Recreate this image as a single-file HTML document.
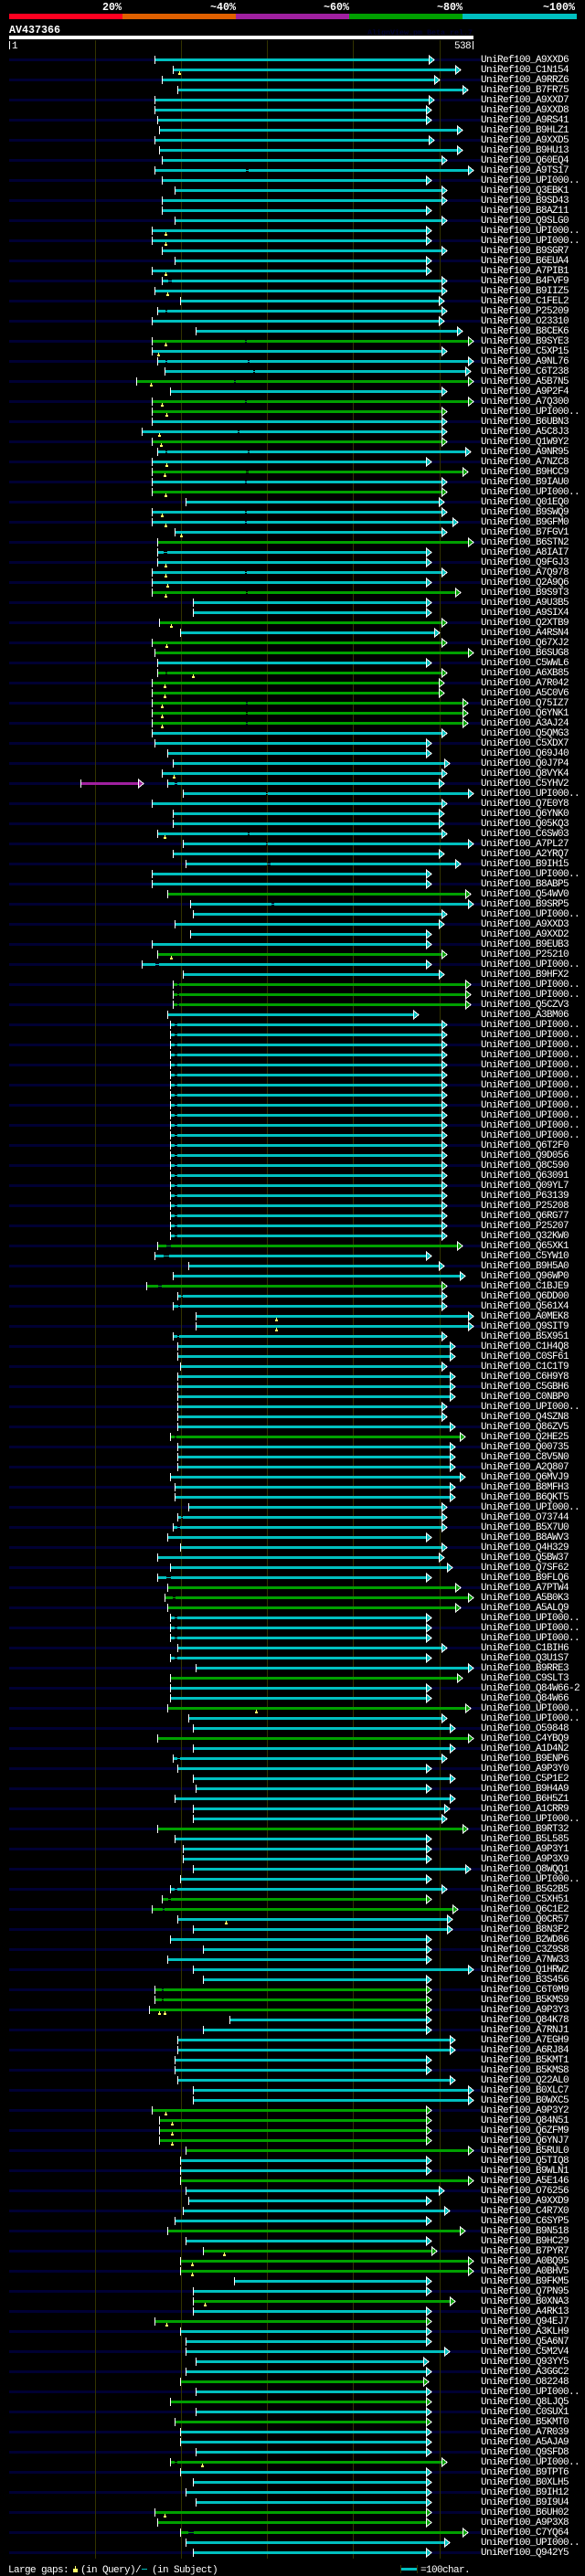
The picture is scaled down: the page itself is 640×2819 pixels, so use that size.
<!DOCTYPE html>
<html lang="en"><head><meta charset="utf-8"><title>AV437366</title>
<style>
html,body{margin:0;padding:0;background:#000}
svg{display:block}
text{font-family:"Liberation Mono",monospace;font-size:11px;letter-spacing:-.6px;fill:#fff}
.b{font-weight:bold;font-size:11.67px;letter-spacing:0}
.t,.g,.p{fill:none;stroke-width:3}
.u,.v{fill:none;stroke-width:1}
.t,.u{stroke:#00c0c0}
.g,.v{stroke:#00a000}
.p{stroke:#a020a0}
</style></head><body>
<svg xmlns="http://www.w3.org/2000/svg" width="640" height="2819" viewBox="0 0 640 2819">
<defs>
<rect id="s" y="-4" width="1" height="9" fill="#fff"/>
<path id="a" d="M.5 -4L6 .5L.5 5Z" fill="#00c0c0" stroke="#fff" stroke-width="1" shape-rendering="crispEdges"/>
<path id="b" d="M.5 -4L6 .5L.5 5Z" fill="#00a000" stroke="#fff" stroke-width="1" shape-rendering="crispEdges"/>
<path id="c" d="M.5 -4L6 .5L.5 5Z" fill="#a020a0" stroke="#fff" stroke-width="1" shape-rendering="crispEdges"/>
<path id="y" d="M0 2h1v2h1v2h-3v-2h1z" fill="#ffff66"/>
</defs>
<rect width="640" height="2819" fill="#000"/>
<rect x="10" y="15" width="124" height="6" fill="#ff0020"/>
<rect x="134" y="15" width="124" height="6" fill="#e06000"/>
<rect x="258" y="15" width="124" height="6" fill="#a020a0"/>
<rect x="382" y="15" width="124" height="6" fill="#00a000"/>
<rect x="506" y="15" width="125" height="6" fill="#00c0c0"/>
<text class="b" x="112" y="11">20%</text>
<text class="b" x="230" y="11">~40%</text>
<text class="b" x="354" y="11">~60%</text>
<text class="b" x="478" y="11">~80%</text>
<text class="b" x="594" y="11">~100%</text>
<text class="b" x="10" y="36">AV437366</text>
<text x="402" y="38" style="font-size:8.33px;letter-spacing:0;font-weight:bold;fill:#000033">AlignView.pm Beta rel.7</text>
<rect x="10" y="39" width="508" height="4" fill="#fff"/>
<rect x="10" y="45" width="1" height="9" fill="#fff"/>
<text x="13" y="53">1</text>
<text x="497" y="53">538</text>
<rect x="517" y="45" width="1" height="9" fill="#fff"/>
<path d="M268 64V2796" stroke="#000033" stroke-width="516" stroke-dasharray="3 19" fill="none"/>
<path d="M104.5 44V2800M198.5 44V2800M292.5 44V2800M386.5 44V2800M481.5 44V2800" stroke="#333300" fill="none"/>
<g transform="translate(0 65)"><path class="t" d="M169 .5H469"/><use href="#s" x="169"/><use href="#a" x="469"/><text x="526" y="3">UniRef100_A9XXD6</text></g>
<g transform="translate(0 76)"><path class="t" d="M189 .5H498"/><use href="#s" x="189"/><use href="#a" x="498"/><use href="#y" x="196"/><text x="526" y="3">UniRef100_C1N154</text></g>
<g transform="translate(0 87)"><path class="t" d="M177 .5H475"/><use href="#s" x="177"/><use href="#a" x="475"/><text x="526" y="3">UniRef100_A9RRZ6</text></g>
<g transform="translate(0 98)"><path class="t" d="M194 .5H506"/><use href="#s" x="194"/><use href="#a" x="506"/><text x="526" y="3">UniRef100_B7FR75</text></g>
<g transform="translate(0 109)"><path class="t" d="M169 .5H469"/><use href="#s" x="169"/><use href="#a" x="469"/><text x="526" y="3">UniRef100_A9XXD7</text></g>
<g transform="translate(0 120)"><path class="t" d="M169 .5H466"/><use href="#s" x="169"/><use href="#a" x="466"/><text x="526" y="3">UniRef100_A9XXD8</text></g>
<g transform="translate(0 131)"><path class="t" d="M172 .5H466"/><use href="#s" x="172"/><use href="#a" x="466"/><text x="526" y="3">UniRef100_A9RS41</text></g>
<g transform="translate(0 142)"><path class="t" d="M174 .5H500"/><use href="#s" x="174"/><use href="#a" x="500"/><text x="526" y="3">UniRef100_B9HLZ1</text></g>
<g transform="translate(0 153)"><path class="t" d="M169 .5H469"/><use href="#s" x="169"/><use href="#a" x="469"/><text x="526" y="3">UniRef100_A9XXD5</text></g>
<g transform="translate(0 164)"><path class="t" d="M174 .5H500"/><use href="#s" x="174"/><use href="#a" x="500"/><text x="526" y="3">UniRef100_B9HU13</text></g>
<g transform="translate(0 175)"><path class="t" d="M177 .5H483"/><use href="#s" x="177"/><use href="#a" x="483"/><text x="526" y="3">UniRef100_Q60EQ4</text></g>
<g transform="translate(0 186)"><path class="t" d="M169 .5H269M272 .5H512"/><path class="u" d="M269 .5H272"/><use href="#s" x="169"/><use href="#a" x="512"/><text x="526" y="3">UniRef100_A9TS17</text></g>
<g transform="translate(0 197)"><path class="t" d="M177 .5H466"/><use href="#s" x="177"/><use href="#a" x="466"/><text x="526" y="3">UniRef100_UPI000..</text></g>
<g transform="translate(0 208)"><path class="t" d="M191 .5H483"/><use href="#s" x="191"/><use href="#a" x="483"/><text x="526" y="3">UniRef100_Q3EBK1</text></g>
<g transform="translate(0 219)"><path class="t" d="M177 .5H483"/><use href="#s" x="177"/><use href="#a" x="483"/><text x="526" y="3">UniRef100_B9SD43</text></g>
<g transform="translate(0 230)"><path class="t" d="M177 .5H466"/><use href="#s" x="177"/><use href="#a" x="466"/><text x="526" y="3">UniRef100_B8AZ11</text></g>
<g transform="translate(0 241)"><path class="t" d="M191 .5H483"/><use href="#s" x="191"/><use href="#a" x="483"/><text x="526" y="3">UniRef100_Q9SLG0</text></g>
<g transform="translate(0 252)"><path class="t" d="M166 .5H466"/><use href="#s" x="166"/><use href="#a" x="466"/><use href="#y" x="181"/><text x="526" y="3">UniRef100_UPI000..</text></g>
<g transform="translate(0 263)"><path class="t" d="M166 .5H466"/><use href="#s" x="166"/><use href="#a" x="466"/><use href="#y" x="181"/><text x="526" y="3">UniRef100_UPI000..</text></g>
<g transform="translate(0 274)"><path class="t" d="M177 .5H483"/><use href="#s" x="177"/><use href="#a" x="483"/><text x="526" y="3">UniRef100_B9SGR7</text></g>
<g transform="translate(0 285)"><path class="t" d="M191 .5H466"/><use href="#s" x="191"/><use href="#a" x="466"/><text x="526" y="3">UniRef100_B6EUA4</text></g>
<g transform="translate(0 296)"><path class="t" d="M166 .5H466"/><use href="#s" x="166"/><use href="#a" x="466"/><use href="#y" x="181"/><text x="526" y="3">UniRef100_A7PIB1</text></g>
<g transform="translate(0 307)"><path class="t" d="M177 .5H184M188 .5H483"/><path class="u" d="M184 .5H188"/><use href="#s" x="177"/><use href="#a" x="483"/><text x="526" y="3">UniRef100_B4FVF9</text></g>
<g transform="translate(0 318)"><path class="t" d="M169 .5H483"/><use href="#s" x="169"/><use href="#a" x="483"/><use href="#y" x="183"/><text x="526" y="3">UniRef100_B9IIZ5</text></g>
<g transform="translate(0 329)"><path class="t" d="M197 .5H480"/><use href="#s" x="197"/><use href="#a" x="480"/><text x="526" y="3">UniRef100_C1FEL2</text></g>
<g transform="translate(0 340)"><path class="t" d="M172 .5H181M183 .5H483"/><path class="u" d="M181 .5H183"/><use href="#s" x="172"/><use href="#a" x="483"/><text x="526" y="3">UniRef100_P25209</text></g>
<g transform="translate(0 351)"><path class="t" d="M166 .5H480"/><use href="#s" x="166"/><use href="#a" x="480"/><text x="526" y="3">UniRef100_O23310</text></g>
<g transform="translate(0 362)"><path class="t" d="M214 .5H500"/><use href="#s" x="214"/><use href="#a" x="500"/><text x="526" y="3">UniRef100_B8CEK6</text></g>
<g transform="translate(0 373)"><path class="g" d="M166 .5H268M270 .5H512"/><path class="v" d="M268 .5H270"/><use href="#s" x="166"/><use href="#b" x="512"/><use href="#y" x="181"/><text x="526" y="3">UniRef100_B9SYE3</text></g>
<g transform="translate(0 384)"><path class="t" d="M166 .5H483"/><use href="#s" x="166"/><use href="#a" x="483"/><use href="#y" x="173"/><text x="526" y="3">UniRef100_C5XP15</text></g>
<g transform="translate(0 395)"><path class="t" d="M172 .5H181M183 .5H271M273 .5H512"/><path class="u" d="M181 .5H183M271 .5H273"/><use href="#s" x="172"/><use href="#a" x="512"/><text x="526" y="3">UniRef100_A9NL76</text></g>
<g transform="translate(0 406)"><path class="t" d="M180 .5H277M279 .5H509"/><path class="u" d="M277 .5H279"/><use href="#s" x="180"/><use href="#a" x="509"/><text x="526" y="3">UniRef100_C6T238</text></g>
<g transform="translate(0 417)"><path class="g" d="M149 .5H256M258 .5H512"/><path class="v" d="M256 .5H258"/><use href="#s" x="149"/><use href="#b" x="512"/><use href="#y" x="165"/><text x="526" y="3">UniRef100_A5B7N5</text></g>
<g transform="translate(0 428)"><path class="t" d="M186 .5H483"/><use href="#s" x="186"/><use href="#a" x="483"/><text x="526" y="3">UniRef100_A9P2F4</text></g>
<g transform="translate(0 439)"><path class="g" d="M166 .5H268M270 .5H512"/><path class="v" d="M268 .5H270"/><use href="#s" x="166"/><use href="#b" x="512"/><use href="#y" x="177"/><text x="526" y="3">UniRef100_A7Q300</text></g>
<g transform="translate(0 450)"><path class="g" d="M166 .5H483"/><use href="#s" x="166"/><use href="#b" x="483"/><use href="#y" x="182"/><text x="526" y="3">UniRef100_UPI000..</text></g>
<g transform="translate(0 461)"><path class="t" d="M166 .5H483"/><use href="#s" x="166"/><use href="#a" x="483"/><text x="526" y="3">UniRef100_B6UBN3</text></g>
<g transform="translate(0 472)"><path class="t" d="M155 .5H260M262 .5H483"/><path class="u" d="M260 .5H262"/><use href="#s" x="155"/><use href="#a" x="483"/><use href="#y" x="174"/><text x="526" y="3">UniRef100_A5C8J3</text></g>
<g transform="translate(0 483)"><path class="g" d="M166 .5H483"/><use href="#s" x="166"/><use href="#b" x="483"/><use href="#y" x="176"/><text x="526" y="3">UniRef100_Q1W9Y2</text></g>
<g transform="translate(0 494)"><path class="t" d="M172 .5H181M183 .5H271M273 .5H509"/><path class="u" d="M181 .5H183M271 .5H273"/><use href="#s" x="172"/><use href="#a" x="509"/><text x="526" y="3">UniRef100_A9NR95</text></g>
<g transform="translate(0 505)"><path class="t" d="M166 .5H466"/><use href="#s" x="166"/><use href="#a" x="466"/><use href="#y" x="182"/><text x="526" y="3">UniRef100_A7NZC8</text></g>
<g transform="translate(0 516)"><path class="g" d="M166 .5H269M272 .5H506"/><path class="v" d="M269 .5H272"/><use href="#s" x="166"/><use href="#b" x="506"/><use href="#y" x="180"/><text x="526" y="3">UniRef100_B9HCC9</text></g>
<g transform="translate(0 527)"><path class="t" d="M166 .5H268M270 .5H483"/><path class="u" d="M268 .5H270"/><use href="#s" x="166"/><use href="#a" x="483"/><text x="526" y="3">UniRef100_B9IAU0</text></g>
<g transform="translate(0 538)"><path class="g" d="M166 .5H483"/><use href="#s" x="166"/><use href="#b" x="483"/><use href="#y" x="181"/><text x="526" y="3">UniRef100_UPI000..</text></g>
<g transform="translate(0 549)"><path class="t" d="M203 .5H480"/><use href="#s" x="203"/><use href="#a" x="480"/><text x="526" y="3">UniRef100_Q01EQ0</text></g>
<g transform="translate(0 560)"><path class="t" d="M166 .5H268M270 .5H483"/><path class="u" d="M268 .5H270"/><use href="#s" x="166"/><use href="#a" x="483"/><use href="#y" x="177"/><text x="526" y="3">UniRef100_B9SWQ9</text></g>
<g transform="translate(0 571)"><path class="t" d="M166 .5H268M270 .5H495"/><path class="u" d="M268 .5H270"/><use href="#s" x="166"/><use href="#a" x="495"/><use href="#y" x="181"/><text x="526" y="3">UniRef100_B9GFM0</text></g>
<g transform="translate(0 582)"><path class="t" d="M191 .5H483"/><use href="#s" x="191"/><use href="#a" x="483"/><use href="#y" x="198"/><text x="526" y="3">UniRef100_B7FGV1</text></g>
<g transform="translate(0 593)"><path class="g" d="M172 .5H512"/><use href="#s" x="172"/><use href="#b" x="512"/><text x="526" y="3">UniRef100_B6STN2</text></g>
<g transform="translate(0 604)"><path class="t" d="M172 .5H179M183 .5H466"/><path class="u" d="M179 .5H183"/><use href="#s" x="172"/><use href="#a" x="466"/><text x="526" y="3">UniRef100_A8IAI7</text></g>
<g transform="translate(0 615)"><path class="t" d="M172 .5H466"/><use href="#s" x="172"/><use href="#a" x="466"/><use href="#y" x="181"/><text x="526" y="3">UniRef100_Q9FGJ3</text></g>
<g transform="translate(0 626)"><path class="t" d="M166 .5H268M270 .5H483"/><path class="u" d="M268 .5H270"/><use href="#s" x="166"/><use href="#a" x="483"/><use href="#y" x="181"/><text x="526" y="3">UniRef100_A7Q978</text></g>
<g transform="translate(0 637)"><path class="t" d="M166 .5H466"/><use href="#s" x="166"/><use href="#a" x="466"/><use href="#y" x="183"/><text x="526" y="3">UniRef100_Q2A9Q6</text></g>
<g transform="translate(0 648)"><path class="g" d="M166 .5H269M271 .5H498"/><path class="v" d="M269 .5H271"/><use href="#s" x="166"/><use href="#b" x="498"/><use href="#y" x="181"/><text x="526" y="3">UniRef100_B9S9T3</text></g>
<g transform="translate(0 659)"><path class="t" d="M211 .5H466"/><use href="#s" x="211"/><use href="#a" x="466"/><text x="526" y="3">UniRef100_A9U3B5</text></g>
<g transform="translate(0 670)"><path class="t" d="M211 .5H466"/><use href="#s" x="211"/><use href="#a" x="466"/><text x="526" y="3">UniRef100_A9SIX4</text></g>
<g transform="translate(0 681)"><path class="g" d="M174 .5H483"/><use href="#s" x="174"/><use href="#b" x="483"/><use href="#y" x="187"/><text x="526" y="3">UniRef100_Q2XTB9</text></g>
<g transform="translate(0 692)"><path class="t" d="M197 .5H475"/><use href="#s" x="197"/><use href="#a" x="475"/><text x="526" y="3">UniRef100_A4RSN4</text></g>
<g transform="translate(0 703)"><path class="g" d="M166 .5H483"/><use href="#s" x="166"/><use href="#b" x="483"/><use href="#y" x="182"/><text x="526" y="3">UniRef100_Q67XJ2</text></g>
<g transform="translate(0 714)"><path class="g" d="M169 .5H512"/><use href="#s" x="169"/><use href="#b" x="512"/><text x="526" y="3">UniRef100_B6SUG8</text></g>
<g transform="translate(0 725)"><path class="t" d="M172 .5H466"/><use href="#s" x="172"/><use href="#a" x="466"/><text x="526" y="3">UniRef100_C5WWL6</text></g>
<g transform="translate(0 736)"><path class="g" d="M172 .5H181M183 .5H483"/><path class="v" d="M181 .5H183"/><use href="#s" x="172"/><use href="#b" x="483"/><use href="#y" x="211"/><text x="526" y="3">UniRef100_A6XB85</text></g>
<g transform="translate(0 747)"><path class="g" d="M166 .5H480"/><use href="#s" x="166"/><use href="#b" x="480"/><use href="#y" x="180"/><text x="526" y="3">UniRef100_A7R042</text></g>
<g transform="translate(0 758)"><path class="g" d="M166 .5H480"/><use href="#s" x="166"/><use href="#b" x="480"/><use href="#y" x="180"/><text x="526" y="3">UniRef100_A5C0V6</text></g>
<g transform="translate(0 769)"><path class="g" d="M166 .5H269M271 .5H506"/><path class="v" d="M269 .5H271"/><use href="#s" x="166"/><use href="#b" x="506"/><use href="#y" x="177"/><text x="526" y="3">UniRef100_Q75IZ7</text></g>
<g transform="translate(0 780)"><path class="g" d="M166 .5H269M271 .5H506"/><path class="v" d="M269 .5H271"/><use href="#s" x="166"/><use href="#b" x="506"/><use href="#y" x="177"/><text x="526" y="3">UniRef100_Q6YNK1</text></g>
<g transform="translate(0 791)"><path class="g" d="M166 .5H269M271 .5H506"/><path class="v" d="M269 .5H271"/><use href="#s" x="166"/><use href="#b" x="506"/><use href="#y" x="177"/><text x="526" y="3">UniRef100_A3AJ24</text></g>
<g transform="translate(0 802)"><path class="t" d="M166 .5H483"/><use href="#s" x="166"/><use href="#a" x="483"/><text x="526" y="3">UniRef100_Q5QMG3</text></g>
<g transform="translate(0 813)"><path class="t" d="M169 .5H466"/><use href="#s" x="169"/><use href="#a" x="466"/><text x="526" y="3">UniRef100_C5XDX7</text></g>
<g transform="translate(0 824)"><path class="t" d="M183 .5H466"/><use href="#s" x="183"/><use href="#a" x="466"/><text x="526" y="3">UniRef100_Q69J40</text></g>
<g transform="translate(0 835)"><path class="t" d="M189 .5H486"/><use href="#s" x="189"/><use href="#a" x="486"/><text x="526" y="3">UniRef100_Q0J7P4</text></g>
<g transform="translate(0 846)"><path class="t" d="M177 .5H483"/><use href="#s" x="177"/><use href="#a" x="483"/><use href="#y" x="190"/><text x="526" y="3">UniRef100_Q8VYK4</text></g>
<g transform="translate(0 857)"><path class="p" d="M88 .5H151"/><use href="#s" x="88"/><use href="#c" x="151"/><path class="t" d="M183 .5H191M194 .5H480"/><path class="u" d="M191 .5H194"/><use href="#s" x="183"/><use href="#a" x="480"/><text x="526" y="3">UniRef100_C5YHV2</text></g>
<g transform="translate(0 868)"><path class="t" d="M200 .5H291M293 .5H512"/><path class="u" d="M291 .5H293"/><use href="#s" x="200"/><use href="#a" x="512"/><text x="526" y="3">UniRef100_UPI000..</text></g>
<g transform="translate(0 879)"><path class="t" d="M166 .5H483"/><use href="#s" x="166"/><use href="#a" x="483"/><text x="526" y="3">UniRef100_Q7E0Y8</text></g>
<g transform="translate(0 890)"><path class="t" d="M189 .5H480"/><use href="#s" x="189"/><use href="#a" x="480"/><text x="526" y="3">UniRef100_Q6YNK0</text></g>
<g transform="translate(0 901)"><path class="t" d="M189 .5H480"/><use href="#s" x="189"/><use href="#a" x="480"/><text x="526" y="3">UniRef100_Q05KQ3</text></g>
<g transform="translate(0 912)"><path class="t" d="M172 .5H271M273 .5H483"/><path class="u" d="M271 .5H273"/><use href="#s" x="172"/><use href="#a" x="483"/><use href="#y" x="180"/><text x="526" y="3">UniRef100_C6SW03</text></g>
<g transform="translate(0 923)"><path class="t" d="M200 .5H291M293 .5H512"/><path class="u" d="M291 .5H293"/><use href="#s" x="200"/><use href="#a" x="512"/><text x="526" y="3">UniRef100_A7PL27</text></g>
<g transform="translate(0 934)"><path class="t" d="M189 .5H480"/><use href="#s" x="189"/><use href="#a" x="480"/><text x="526" y="3">UniRef100_A2YRQ7</text></g>
<g transform="translate(0 945)"><path class="t" d="M203 .5H292M296 .5H498"/><path class="u" d="M292 .5H296"/><use href="#s" x="203"/><use href="#a" x="498"/><text x="526" y="3">UniRef100_B9IH15</text></g>
<g transform="translate(0 956)"><path class="t" d="M166 .5H466"/><use href="#s" x="166"/><use href="#a" x="466"/><text x="526" y="3">UniRef100_UPI000..</text></g>
<g transform="translate(0 967)"><path class="t" d="M166 .5H466"/><use href="#s" x="166"/><use href="#a" x="466"/><text x="526" y="3">UniRef100_B8ABP5</text></g>
<g transform="translate(0 978)"><path class="g" d="M183 .5H509"/><use href="#s" x="183"/><use href="#b" x="509"/><text x="526" y="3">UniRef100_Q54WV0</text></g>
<g transform="translate(0 989)"><path class="t" d="M208 .5H297M300 .5H512"/><path class="u" d="M297 .5H300"/><use href="#s" x="208"/><use href="#a" x="512"/><text x="526" y="3">UniRef100_B9SRP5</text></g>
<g transform="translate(0 1000)"><path class="t" d="M211 .5H483"/><use href="#s" x="211"/><use href="#a" x="483"/><text x="526" y="3">UniRef100_UPI000..</text></g>
<g transform="translate(0 1011)"><path class="t" d="M191 .5H480"/><use href="#s" x="191"/><use href="#a" x="480"/><text x="526" y="3">UniRef100_A9XXD3</text></g>
<g transform="translate(0 1022)"><path class="t" d="M208 .5H466"/><use href="#s" x="208"/><use href="#a" x="466"/><text x="526" y="3">UniRef100_A9XXD2</text></g>
<g transform="translate(0 1033)"><path class="t" d="M166 .5H466"/><use href="#s" x="166"/><use href="#a" x="466"/><text x="526" y="3">UniRef100_B9EUB3</text></g>
<g transform="translate(0 1044)"><path class="g" d="M172 .5H483"/><use href="#s" x="172"/><use href="#b" x="483"/><use href="#y" x="187"/><text x="526" y="3">UniRef100_P25210</text></g>
<g transform="translate(0 1055)"><path class="t" d="M155 .5H170M174 .5H466"/><path class="u" d="M170 .5H174"/><use href="#s" x="155"/><use href="#a" x="466"/><text x="526" y="3">UniRef100_UPI000..</text></g>
<g transform="translate(0 1066)"><path class="t" d="M200 .5H480"/><use href="#s" x="200"/><use href="#a" x="480"/><text x="526" y="3">UniRef100_B9HFX2</text></g>
<g transform="translate(0 1077)"><path class="g" d="M189 .5H194M196 .5H509"/><path class="v" d="M194 .5H196"/><use href="#s" x="189"/><use href="#b" x="509"/><text x="526" y="3">UniRef100_UPI000..</text></g>
<g transform="translate(0 1088)"><path class="g" d="M189 .5H194M196 .5H509"/><path class="v" d="M194 .5H196"/><use href="#s" x="189"/><use href="#b" x="509"/><text x="526" y="3">UniRef100_UPI000..</text></g>
<g transform="translate(0 1099)"><path class="g" d="M189 .5H194M196 .5H509"/><path class="v" d="M194 .5H196"/><use href="#s" x="189"/><use href="#b" x="509"/><text x="526" y="3">UniRef100_Q5CZV3</text></g>
<g transform="translate(0 1110)"><path class="t" d="M183 .5H452"/><use href="#s" x="183"/><use href="#a" x="452"/><text x="526" y="3">UniRef100_A3BM06</text></g>
<g transform="translate(0 1121)"><path class="t" d="M186 .5H191M194 .5H483"/><path class="u" d="M191 .5H194"/><use href="#s" x="186"/><use href="#a" x="483"/><text x="526" y="3">UniRef100_UPI000..</text></g>
<g transform="translate(0 1132)"><path class="t" d="M186 .5H191M194 .5H483"/><path class="u" d="M191 .5H194"/><use href="#s" x="186"/><use href="#a" x="483"/><text x="526" y="3">UniRef100_UPI000..</text></g>
<g transform="translate(0 1143)"><path class="t" d="M186 .5H191M194 .5H483"/><path class="u" d="M191 .5H194"/><use href="#s" x="186"/><use href="#a" x="483"/><text x="526" y="3">UniRef100_UPI000..</text></g>
<g transform="translate(0 1154)"><path class="t" d="M186 .5H191M194 .5H483"/><path class="u" d="M191 .5H194"/><use href="#s" x="186"/><use href="#a" x="483"/><text x="526" y="3">UniRef100_UPI000..</text></g>
<g transform="translate(0 1165)"><path class="t" d="M186 .5H191M194 .5H483"/><path class="u" d="M191 .5H194"/><use href="#s" x="186"/><use href="#a" x="483"/><text x="526" y="3">UniRef100_UPI000..</text></g>
<g transform="translate(0 1176)"><path class="t" d="M186 .5H191M194 .5H483"/><path class="u" d="M191 .5H194"/><use href="#s" x="186"/><use href="#a" x="483"/><text x="526" y="3">UniRef100_UPI000..</text></g>
<g transform="translate(0 1187)"><path class="t" d="M186 .5H191M194 .5H483"/><path class="u" d="M191 .5H194"/><use href="#s" x="186"/><use href="#a" x="483"/><text x="526" y="3">UniRef100_UPI000..</text></g>
<g transform="translate(0 1198)"><path class="t" d="M186 .5H191M194 .5H483"/><path class="u" d="M191 .5H194"/><use href="#s" x="186"/><use href="#a" x="483"/><text x="526" y="3">UniRef100_UPI000..</text></g>
<g transform="translate(0 1209)"><path class="t" d="M186 .5H191M194 .5H483"/><path class="u" d="M191 .5H194"/><use href="#s" x="186"/><use href="#a" x="483"/><text x="526" y="3">UniRef100_UPI000..</text></g>
<g transform="translate(0 1220)"><path class="t" d="M186 .5H191M194 .5H483"/><path class="u" d="M191 .5H194"/><use href="#s" x="186"/><use href="#a" x="483"/><text x="526" y="3">UniRef100_UPI000..</text></g>
<g transform="translate(0 1231)"><path class="t" d="M186 .5H191M194 .5H483"/><path class="u" d="M191 .5H194"/><use href="#s" x="186"/><use href="#a" x="483"/><text x="526" y="3">UniRef100_UPI000..</text></g>
<g transform="translate(0 1242)"><path class="t" d="M186 .5H191M194 .5H483"/><path class="u" d="M191 .5H194"/><use href="#s" x="186"/><use href="#a" x="483"/><text x="526" y="3">UniRef100_UPI000..</text></g>
<g transform="translate(0 1253)"><path class="t" d="M186 .5H191M194 .5H483"/><path class="u" d="M191 .5H194"/><use href="#s" x="186"/><use href="#a" x="483"/><text x="526" y="3">UniRef100_Q6T2F0</text></g>
<g transform="translate(0 1264)"><path class="t" d="M186 .5H191M194 .5H483"/><path class="u" d="M191 .5H194"/><use href="#s" x="186"/><use href="#a" x="483"/><text x="526" y="3">UniRef100_Q9D056</text></g>
<g transform="translate(0 1275)"><path class="t" d="M186 .5H191M194 .5H483"/><path class="u" d="M191 .5H194"/><use href="#s" x="186"/><use href="#a" x="483"/><text x="526" y="3">UniRef100_Q8C590</text></g>
<g transform="translate(0 1286)"><path class="t" d="M186 .5H191M194 .5H483"/><path class="u" d="M191 .5H194"/><use href="#s" x="186"/><use href="#a" x="483"/><text x="526" y="3">UniRef100_Q63091</text></g>
<g transform="translate(0 1297)"><path class="t" d="M186 .5H191M194 .5H483"/><path class="u" d="M191 .5H194"/><use href="#s" x="186"/><use href="#a" x="483"/><text x="526" y="3">UniRef100_Q09YL7</text></g>
<g transform="translate(0 1308)"><path class="t" d="M186 .5H191M194 .5H483"/><path class="u" d="M191 .5H194"/><use href="#s" x="186"/><use href="#a" x="483"/><text x="526" y="3">UniRef100_P63139</text></g>
<g transform="translate(0 1319)"><path class="t" d="M186 .5H191M194 .5H483"/><path class="u" d="M191 .5H194"/><use href="#s" x="186"/><use href="#a" x="483"/><text x="526" y="3">UniRef100_P25208</text></g>
<g transform="translate(0 1330)"><path class="t" d="M186 .5H191M194 .5H483"/><path class="u" d="M191 .5H194"/><use href="#s" x="186"/><use href="#a" x="483"/><text x="526" y="3">UniRef100_Q6RG77</text></g>
<g transform="translate(0 1341)"><path class="t" d="M186 .5H191M194 .5H483"/><path class="u" d="M191 .5H194"/><use href="#s" x="186"/><use href="#a" x="483"/><text x="526" y="3">UniRef100_P25207</text></g>
<g transform="translate(0 1352)"><path class="t" d="M186 .5H191M194 .5H483"/><path class="u" d="M191 .5H194"/><use href="#s" x="186"/><use href="#a" x="483"/><text x="526" y="3">UniRef100_Q32KW0</text></g>
<g transform="translate(0 1363)"><path class="g" d="M172 .5H182M187 .5H500"/><path class="v" d="M182 .5H187"/><use href="#s" x="172"/><use href="#b" x="500"/><text x="526" y="3">UniRef100_Q65XK1</text></g>
<g transform="translate(0 1374)"><path class="t" d="M169 .5H179M185 .5H466"/><path class="u" d="M179 .5H185"/><use href="#s" x="169"/><use href="#a" x="466"/><text x="526" y="3">UniRef100_C5YW10</text></g>
<g transform="translate(0 1385)"><path class="t" d="M206 .5H480"/><use href="#s" x="206"/><use href="#a" x="480"/><text x="526" y="3">UniRef100_B9H5A0</text></g>
<g transform="translate(0 1396)"><path class="t" d="M189 .5H503"/><use href="#s" x="189"/><use href="#a" x="503"/><text x="526" y="3">UniRef100_Q96WP0</text></g>
<g transform="translate(0 1407)"><path class="g" d="M160 .5H173M177 .5H483"/><path class="v" d="M173 .5H177"/><use href="#s" x="160"/><use href="#b" x="483"/><text x="526" y="3">UniRef100_C1BJE9</text></g>
<g transform="translate(0 1418)"><path class="t" d="M194 .5H198M200 .5H483"/><path class="u" d="M198 .5H200"/><use href="#s" x="194"/><use href="#a" x="483"/><text x="526" y="3">UniRef100_Q6DD00</text></g>
<g transform="translate(0 1429)"><path class="t" d="M189 .5H195M197 .5H483"/><path class="u" d="M195 .5H197"/><use href="#s" x="189"/><use href="#a" x="483"/><text x="526" y="3">UniRef100_Q561X4</text></g>
<g transform="translate(0 1440)"><path class="t" d="M214 .5H512"/><use href="#s" x="214"/><use href="#a" x="512"/><use href="#y" x="302"/><text x="526" y="3">UniRef100_A0MEK8</text></g>
<g transform="translate(0 1451)"><path class="t" d="M214 .5H512"/><use href="#s" x="214"/><use href="#a" x="512"/><use href="#y" x="302"/><text x="526" y="3">UniRef100_Q9SIT9</text></g>
<g transform="translate(0 1462)"><path class="t" d="M189 .5H194M196 .5H483"/><path class="u" d="M194 .5H196"/><use href="#s" x="189"/><use href="#a" x="483"/><text x="526" y="3">UniRef100_B5X951</text></g>
<g transform="translate(0 1473)"><path class="t" d="M194 .5H492"/><use href="#s" x="194"/><use href="#a" x="492"/><text x="526" y="3">UniRef100_C1H4Q8</text></g>
<g transform="translate(0 1484)"><path class="t" d="M194 .5H492"/><use href="#s" x="194"/><use href="#a" x="492"/><text x="526" y="3">UniRef100_C0SF61</text></g>
<g transform="translate(0 1495)"><path class="t" d="M197 .5H483"/><use href="#s" x="197"/><use href="#a" x="483"/><text x="526" y="3">UniRef100_C1C1T9</text></g>
<g transform="translate(0 1506)"><path class="t" d="M194 .5H492"/><use href="#s" x="194"/><use href="#a" x="492"/><text x="526" y="3">UniRef100_C6H9Y8</text></g>
<g transform="translate(0 1517)"><path class="t" d="M194 .5H492"/><use href="#s" x="194"/><use href="#a" x="492"/><text x="526" y="3">UniRef100_C5GBH6</text></g>
<g transform="translate(0 1528)"><path class="t" d="M194 .5H492"/><use href="#s" x="194"/><use href="#a" x="492"/><text x="526" y="3">UniRef100_C0NBP0</text></g>
<g transform="translate(0 1539)"><path class="t" d="M194 .5H483"/><use href="#s" x="194"/><use href="#a" x="483"/><text x="526" y="3">UniRef100_UPI000..</text></g>
<g transform="translate(0 1550)"><path class="t" d="M194 .5H483"/><use href="#s" x="194"/><use href="#a" x="483"/><text x="526" y="3">UniRef100_Q4SZN8</text></g>
<g transform="translate(0 1561)"><path class="t" d="M194 .5H492"/><use href="#s" x="194"/><use href="#a" x="492"/><text x="526" y="3">UniRef100_Q86ZV5</text></g>
<g transform="translate(0 1572)"><path class="g" d="M186 .5H191M193 .5H503"/><path class="v" d="M191 .5H193"/><use href="#s" x="186"/><use href="#b" x="503"/><text x="526" y="3">UniRef100_Q2HE25</text></g>
<g transform="translate(0 1583)"><path class="t" d="M194 .5H492"/><use href="#s" x="194"/><use href="#a" x="492"/><text x="526" y="3">UniRef100_Q00735</text></g>
<g transform="translate(0 1594)"><path class="t" d="M194 .5H492"/><use href="#s" x="194"/><use href="#a" x="492"/><text x="526" y="3">UniRef100_C8V5N0</text></g>
<g transform="translate(0 1605)"><path class="t" d="M194 .5H492"/><use href="#s" x="194"/><use href="#a" x="492"/><text x="526" y="3">UniRef100_A2Q807</text></g>
<g transform="translate(0 1616)"><path class="t" d="M186 .5H503"/><use href="#s" x="186"/><use href="#a" x="503"/><text x="526" y="3">UniRef100_Q6MVJ9</text></g>
<g transform="translate(0 1627)"><path class="t" d="M191 .5H492"/><use href="#s" x="191"/><use href="#a" x="492"/><text x="526" y="3">UniRef100_B8MFH3</text></g>
<g transform="translate(0 1638)"><path class="t" d="M191 .5H492"/><use href="#s" x="191"/><use href="#a" x="492"/><text x="526" y="3">UniRef100_B6QKT5</text></g>
<g transform="translate(0 1649)"><path class="t" d="M206 .5H483"/><use href="#s" x="206"/><use href="#a" x="483"/><text x="526" y="3">UniRef100_UPI000..</text></g>
<g transform="translate(0 1660)"><path class="t" d="M194 .5H198M200 .5H483"/><path class="u" d="M198 .5H200"/><use href="#s" x="194"/><use href="#a" x="483"/><text x="526" y="3">UniRef100_O73744</text></g>
<g transform="translate(0 1671)"><path class="t" d="M189 .5H194M197 .5H483"/><path class="u" d="M194 .5H197"/><use href="#s" x="189"/><use href="#a" x="483"/><text x="526" y="3">UniRef100_B5X7U0</text></g>
<g transform="translate(0 1682)"><path class="t" d="M183 .5H466"/><use href="#s" x="183"/><use href="#a" x="466"/><text x="526" y="3">UniRef100_B8AWV3</text></g>
<g transform="translate(0 1693)"><path class="t" d="M197 .5H483"/><use href="#s" x="197"/><use href="#a" x="483"/><text x="526" y="3">UniRef100_Q4H329</text></g>
<g transform="translate(0 1704)"><path class="t" d="M172 .5H480"/><use href="#s" x="172"/><use href="#a" x="480"/><text x="526" y="3">UniRef100_Q5BW37</text></g>
<g transform="translate(0 1715)"><path class="t" d="M186 .5H489"/><use href="#s" x="186"/><use href="#a" x="489"/><text x="526" y="3">UniRef100_Q7SF62</text></g>
<g transform="translate(0 1726)"><path class="t" d="M172 .5H182M187 .5H466"/><path class="u" d="M182 .5H187"/><use href="#s" x="172"/><use href="#a" x="466"/><text x="526" y="3">UniRef100_B9FLQ6</text></g>
<g transform="translate(0 1737)"><path class="g" d="M183 .5H498"/><use href="#s" x="183"/><use href="#b" x="498"/><text x="526" y="3">UniRef100_A7PTW4</text></g>
<g transform="translate(0 1748)"><path class="g" d="M180 .5H189M192 .5H512"/><path class="v" d="M189 .5H192"/><use href="#s" x="180"/><use href="#b" x="512"/><text x="526" y="3">UniRef100_A5B0K3</text></g>
<g transform="translate(0 1759)"><path class="g" d="M183 .5H498"/><use href="#s" x="183"/><use href="#b" x="498"/><text x="526" y="3">UniRef100_A5ALQ9</text></g>
<g transform="translate(0 1770)"><path class="t" d="M186 .5H191M194 .5H466"/><path class="u" d="M191 .5H194"/><use href="#s" x="186"/><use href="#a" x="466"/><text x="526" y="3">UniRef100_UPI000..</text></g>
<g transform="translate(0 1781)"><path class="t" d="M186 .5H191M194 .5H466"/><path class="u" d="M191 .5H194"/><use href="#s" x="186"/><use href="#a" x="466"/><text x="526" y="3">UniRef100_UPI000..</text></g>
<g transform="translate(0 1792)"><path class="t" d="M186 .5H191M194 .5H466"/><path class="u" d="M191 .5H194"/><use href="#s" x="186"/><use href="#a" x="466"/><text x="526" y="3">UniRef100_UPI000..</text></g>
<g transform="translate(0 1803)"><path class="t" d="M194 .5H483"/><use href="#s" x="194"/><use href="#a" x="483"/><text x="526" y="3">UniRef100_C1BIH6</text></g>
<g transform="translate(0 1814)"><path class="t" d="M186 .5H191M194 .5H466"/><path class="u" d="M191 .5H194"/><use href="#s" x="186"/><use href="#a" x="466"/><text x="526" y="3">UniRef100_Q3U1S7</text></g>
<g transform="translate(0 1825)"><path class="t" d="M214 .5H512"/><use href="#s" x="214"/><use href="#a" x="512"/><text x="526" y="3">UniRef100_B9RRE3</text></g>
<g transform="translate(0 1836)"><path class="g" d="M186 .5H500"/><use href="#s" x="186"/><use href="#b" x="500"/><text x="526" y="3">UniRef100_C9SLT3</text></g>
<g transform="translate(0 1847)"><path class="t" d="M186 .5H466"/><use href="#s" x="186"/><use href="#a" x="466"/><text x="526" y="3">UniRef100_Q84W66-2</text></g>
<g transform="translate(0 1858)"><path class="t" d="M186 .5H466"/><use href="#s" x="186"/><use href="#a" x="466"/><text x="526" y="3">UniRef100_Q84W66</text></g>
<g transform="translate(0 1869)"><path class="g" d="M183 .5H509"/><use href="#s" x="183"/><use href="#b" x="509"/><use href="#y" x="280"/><text x="526" y="3">UniRef100_UPI000..</text></g>
<g transform="translate(0 1880)"><path class="t" d="M206 .5H483"/><use href="#s" x="206"/><use href="#a" x="483"/><text x="526" y="3">UniRef100_UPI000..</text></g>
<g transform="translate(0 1891)"><path class="t" d="M211 .5H492"/><use href="#s" x="211"/><use href="#a" x="492"/><text x="526" y="3">UniRef100_O59848</text></g>
<g transform="translate(0 1902)"><path class="g" d="M172 .5H512"/><use href="#s" x="172"/><use href="#b" x="512"/><text x="526" y="3">UniRef100_C4YBQ9</text></g>
<g transform="translate(0 1913)"><path class="t" d="M211 .5H492"/><use href="#s" x="211"/><use href="#a" x="492"/><text x="526" y="3">UniRef100_A1D4N2</text></g>
<g transform="translate(0 1924)"><path class="t" d="M189 .5H194M197 .5H483"/><path class="u" d="M194 .5H197"/><use href="#s" x="189"/><use href="#a" x="483"/><text x="526" y="3">UniRef100_B9ENP6</text></g>
<g transform="translate(0 1935)"><path class="t" d="M194 .5H466"/><use href="#s" x="194"/><use href="#a" x="466"/><text x="526" y="3">UniRef100_A9P3Y0</text></g>
<g transform="translate(0 1946)"><path class="t" d="M211 .5H492"/><use href="#s" x="211"/><use href="#a" x="492"/><text x="526" y="3">UniRef100_C5P1E2</text></g>
<g transform="translate(0 1957)"><path class="t" d="M214 .5H466"/><use href="#s" x="214"/><use href="#a" x="466"/><text x="526" y="3">UniRef100_B9H4A9</text></g>
<g transform="translate(0 1968)"><path class="t" d="M191 .5H492"/><use href="#s" x="191"/><use href="#a" x="492"/><text x="526" y="3">UniRef100_B6H5Z1</text></g>
<g transform="translate(0 1979)"><path class="t" d="M211 .5H486"/><use href="#s" x="211"/><use href="#a" x="486"/><text x="526" y="3">UniRef100_A1CRR9</text></g>
<g transform="translate(0 1990)"><path class="t" d="M211 .5H483"/><use href="#s" x="211"/><use href="#a" x="483"/><text x="526" y="3">UniRef100_UPI000..</text></g>
<g transform="translate(0 2001)"><path class="g" d="M172 .5H506"/><use href="#s" x="172"/><use href="#b" x="506"/><text x="526" y="3">UniRef100_B9RT32</text></g>
<g transform="translate(0 2012)"><path class="t" d="M191 .5H466"/><use href="#s" x="191"/><use href="#a" x="466"/><text x="526" y="3">UniRef100_B5L585</text></g>
<g transform="translate(0 2023)"><path class="t" d="M200 .5H466"/><use href="#s" x="200"/><use href="#a" x="466"/><text x="526" y="3">UniRef100_A9P3Y1</text></g>
<g transform="translate(0 2034)"><path class="t" d="M200 .5H466"/><use href="#s" x="200"/><use href="#a" x="466"/><text x="526" y="3">UniRef100_A9P3X9</text></g>
<g transform="translate(0 2045)"><path class="t" d="M211 .5H509"/><use href="#s" x="211"/><use href="#a" x="509"/><text x="526" y="3">UniRef100_Q8WQQ1</text></g>
<g transform="translate(0 2056)"><path class="t" d="M197 .5H466"/><use href="#s" x="197"/><use href="#a" x="466"/><text x="526" y="3">UniRef100_UPI000..</text></g>
<g transform="translate(0 2067)"><path class="t" d="M186 .5H191M194 .5H483"/><path class="u" d="M191 .5H194"/><use href="#s" x="186"/><use href="#a" x="483"/><text x="526" y="3">UniRef100_B5G2B5</text></g>
<g transform="translate(0 2078)"><path class="g" d="M177 .5H184M187 .5H466"/><path class="v" d="M184 .5H187"/><use href="#s" x="177"/><use href="#b" x="466"/><text x="526" y="3">UniRef100_C5XH51</text></g>
<g transform="translate(0 2089)"><path class="g" d="M166 .5H178M180 .5H495"/><path class="v" d="M178 .5H180"/><use href="#s" x="166"/><use href="#b" x="495"/><text x="526" y="3">UniRef100_Q6C1E2</text></g>
<g transform="translate(0 2100)"><path class="t" d="M194 .5H489"/><use href="#s" x="194"/><use href="#a" x="489"/><use href="#y" x="247"/><text x="526" y="3">UniRef100_Q0CR57</text></g>
<g transform="translate(0 2111)"><path class="t" d="M211 .5H489"/><use href="#s" x="211"/><use href="#a" x="489"/><text x="526" y="3">UniRef100_B8N3F2</text></g>
<g transform="translate(0 2122)"><path class="t" d="M186 .5H466"/><use href="#s" x="186"/><use href="#a" x="466"/><text x="526" y="3">UniRef100_B2WD86</text></g>
<g transform="translate(0 2133)"><path class="t" d="M222 .5H466"/><use href="#s" x="222"/><use href="#a" x="466"/><text x="526" y="3">UniRef100_C3Z9S8</text></g>
<g transform="translate(0 2144)"><path class="t" d="M183 .5H466"/><use href="#s" x="183"/><use href="#a" x="466"/><text x="526" y="3">UniRef100_A7NW33</text></g>
<g transform="translate(0 2155)"><path class="t" d="M211 .5H512"/><use href="#s" x="211"/><use href="#a" x="512"/><text x="526" y="3">UniRef100_Q1HRW2</text></g>
<g transform="translate(0 2166)"><path class="t" d="M222 .5H466"/><use href="#s" x="222"/><use href="#a" x="466"/><text x="526" y="3">UniRef100_B3S456</text></g>
<g transform="translate(0 2177)"><path class="g" d="M169 .5H177M179 .5H466"/><path class="v" d="M177 .5H179"/><use href="#s" x="169"/><use href="#b" x="466"/><text x="526" y="3">UniRef100_C6T0M9</text></g>
<g transform="translate(0 2188)"><path class="g" d="M169 .5H177M179 .5H466"/><path class="v" d="M177 .5H179"/><use href="#s" x="169"/><use href="#b" x="466"/><text x="526" y="3">UniRef100_B5KMS9</text></g>
<g transform="translate(0 2199)"><path class="g" d="M163 .5H466"/><use href="#s" x="163"/><use href="#b" x="466"/><use href="#y" x="174"/><use href="#y" x="180"/><text x="526" y="3">UniRef100_A9P3Y3</text></g>
<g transform="translate(0 2210)"><path class="t" d="M251 .5H466"/><use href="#s" x="251"/><use href="#a" x="466"/><text x="526" y="3">UniRef100_Q84K78</text></g>
<g transform="translate(0 2221)"><path class="t" d="M222 .5H466"/><use href="#s" x="222"/><use href="#a" x="466"/><text x="526" y="3">UniRef100_A7RNJ1</text></g>
<g transform="translate(0 2232)"><path class="t" d="M194 .5H492"/><use href="#s" x="194"/><use href="#a" x="492"/><text x="526" y="3">UniRef100_A7EGH9</text></g>
<g transform="translate(0 2243)"><path class="t" d="M194 .5H492"/><use href="#s" x="194"/><use href="#a" x="492"/><text x="526" y="3">UniRef100_A6RJ84</text></g>
<g transform="translate(0 2254)"><path class="t" d="M191 .5H466"/><use href="#s" x="191"/><use href="#a" x="466"/><text x="526" y="3">UniRef100_B5KMT1</text></g>
<g transform="translate(0 2265)"><path class="t" d="M191 .5H466"/><use href="#s" x="191"/><use href="#a" x="466"/><text x="526" y="3">UniRef100_B5KMS8</text></g>
<g transform="translate(0 2276)"><path class="t" d="M194 .5H492"/><use href="#s" x="194"/><use href="#a" x="492"/><text x="526" y="3">UniRef100_Q22AL0</text></g>
<g transform="translate(0 2287)"><path class="t" d="M211 .5H512"/><use href="#s" x="211"/><use href="#a" x="512"/><text x="526" y="3">UniRef100_B0XLC7</text></g>
<g transform="translate(0 2298)"><path class="t" d="M211 .5H512"/><use href="#s" x="211"/><use href="#a" x="512"/><text x="526" y="3">UniRef100_B0WXC5</text></g>
<g transform="translate(0 2309)"><path class="g" d="M166 .5H466"/><use href="#s" x="166"/><use href="#b" x="466"/><use href="#y" x="181"/><text x="526" y="3">UniRef100_A9P3Y2</text></g>
<g transform="translate(0 2320)"><path class="g" d="M174 .5H466"/><use href="#s" x="174"/><use href="#b" x="466"/><use href="#y" x="188"/><text x="526" y="3">UniRef100_Q84N51</text></g>
<g transform="translate(0 2331)"><path class="g" d="M174 .5H466"/><use href="#s" x="174"/><use href="#b" x="466"/><use href="#y" x="188"/><text x="526" y="3">UniRef100_Q6ZFM9</text></g>
<g transform="translate(0 2342)"><path class="g" d="M174 .5H466"/><use href="#s" x="174"/><use href="#b" x="466"/><use href="#y" x="188"/><text x="526" y="3">UniRef100_Q6YNJ7</text></g>
<g transform="translate(0 2353)"><path class="g" d="M203 .5H512"/><use href="#s" x="203"/><use href="#b" x="512"/><text x="526" y="3">UniRef100_B5RUL0</text></g>
<g transform="translate(0 2364)"><path class="t" d="M197 .5H466"/><use href="#s" x="197"/><use href="#a" x="466"/><text x="526" y="3">UniRef100_Q5TIQ8</text></g>
<g transform="translate(0 2375)"><path class="t" d="M197 .5H466"/><use href="#s" x="197"/><use href="#a" x="466"/><text x="526" y="3">UniRef100_B9WLN1</text></g>
<g transform="translate(0 2386)"><path class="g" d="M197 .5H512"/><use href="#s" x="197"/><use href="#b" x="512"/><text x="526" y="3">UniRef100_A5E146</text></g>
<g transform="translate(0 2397)"><path class="t" d="M203 .5H480"/><use href="#s" x="203"/><use href="#a" x="480"/><text x="526" y="3">UniRef100_O76256</text></g>
<g transform="translate(0 2408)"><path class="t" d="M206 .5H466"/><use href="#s" x="206"/><use href="#a" x="466"/><text x="526" y="3">UniRef100_A9XXD9</text></g>
<g transform="translate(0 2419)"><path class="t" d="M200 .5H486"/><use href="#s" x="200"/><use href="#a" x="486"/><text x="526" y="3">UniRef100_C4R7X0</text></g>
<g transform="translate(0 2430)"><path class="t" d="M191 .5H466"/><use href="#s" x="191"/><use href="#a" x="466"/><text x="526" y="3">UniRef100_C6SYP5</text></g>
<g transform="translate(0 2441)"><path class="g" d="M183 .5H503"/><use href="#s" x="183"/><use href="#b" x="503"/><text x="526" y="3">UniRef100_B9N518</text></g>
<g transform="translate(0 2452)"><path class="t" d="M203 .5H466"/><use href="#s" x="203"/><use href="#a" x="466"/><text x="526" y="3">UniRef100_B9HC29</text></g>
<g transform="translate(0 2463)"><path class="g" d="M222 .5H472"/><use href="#s" x="222"/><use href="#b" x="472"/><use href="#y" x="245"/><text x="526" y="3">UniRef100_B7PYR7</text></g>
<g transform="translate(0 2474)"><path class="g" d="M197 .5H512"/><use href="#s" x="197"/><use href="#b" x="512"/><use href="#y" x="210"/><text x="526" y="3">UniRef100_A0BQ95</text></g>
<g transform="translate(0 2485)"><path class="g" d="M197 .5H512"/><use href="#s" x="197"/><use href="#b" x="512"/><use href="#y" x="210"/><text x="526" y="3">UniRef100_A0BHV5</text></g>
<g transform="translate(0 2496)"><path class="t" d="M256 .5H466"/><use href="#s" x="256"/><use href="#a" x="466"/><text x="526" y="3">UniRef100_B9FKM5</text></g>
<g transform="translate(0 2507)"><path class="t" d="M211 .5H466"/><use href="#s" x="211"/><use href="#a" x="466"/><text x="526" y="3">UniRef100_Q7PN95</text></g>
<g transform="translate(0 2518)"><path class="g" d="M211 .5H492"/><use href="#s" x="211"/><use href="#b" x="492"/><use href="#y" x="224"/><text x="526" y="3">UniRef100_B0XNA3</text></g>
<g transform="translate(0 2529)"><path class="t" d="M211 .5H466"/><use href="#s" x="211"/><use href="#a" x="466"/><text x="526" y="3">UniRef100_A4RK13</text></g>
<g transform="translate(0 2540)"><path class="g" d="M169 .5H466"/><use href="#s" x="169"/><use href="#b" x="466"/><use href="#y" x="182"/><text x="526" y="3">UniRef100_Q94EJ7</text></g>
<g transform="translate(0 2551)"><path class="t" d="M197 .5H466"/><use href="#s" x="197"/><use href="#a" x="466"/><text x="526" y="3">UniRef100_A3KLH9</text></g>
<g transform="translate(0 2562)"><path class="t" d="M203 .5H466"/><use href="#s" x="203"/><use href="#a" x="466"/><text x="526" y="3">UniRef100_Q5A6N7</text></g>
<g transform="translate(0 2573)"><path class="t" d="M203 .5H486"/><use href="#s" x="203"/><use href="#a" x="486"/><text x="526" y="3">UniRef100_C5M2V4</text></g>
<g transform="translate(0 2584)"><path class="t" d="M214 .5H463"/><use href="#s" x="214"/><use href="#a" x="463"/><text x="526" y="3">UniRef100_Q93YY5</text></g>
<g transform="translate(0 2595)"><path class="t" d="M203 .5H466"/><use href="#s" x="203"/><use href="#a" x="466"/><text x="526" y="3">UniRef100_A3GGC2</text></g>
<g transform="translate(0 2606)"><path class="g" d="M197 .5H463"/><use href="#s" x="197"/><use href="#b" x="463"/><text x="526" y="3">UniRef100_O82248</text></g>
<g transform="translate(0 2617)"><path class="t" d="M214 .5H466"/><use href="#s" x="214"/><use href="#a" x="466"/><text x="526" y="3">UniRef100_UPI000..</text></g>
<g transform="translate(0 2628)"><path class="g" d="M186 .5H466"/><use href="#s" x="186"/><use href="#b" x="466"/><text x="526" y="3">UniRef100_Q8LJQ5</text></g>
<g transform="translate(0 2639)"><path class="t" d="M214 .5H466"/><use href="#s" x="214"/><use href="#a" x="466"/><text x="526" y="3">UniRef100_C0SUX1</text></g>
<g transform="translate(0 2650)"><path class="g" d="M191 .5H466"/><use href="#s" x="191"/><use href="#b" x="466"/><text x="526" y="3">UniRef100_B5KMT0</text></g>
<g transform="translate(0 2661)"><path class="t" d="M197 .5H466"/><use href="#s" x="197"/><use href="#a" x="466"/><text x="526" y="3">UniRef100_A7R039</text></g>
<g transform="translate(0 2672)"><path class="t" d="M197 .5H466"/><use href="#s" x="197"/><use href="#a" x="466"/><text x="526" y="3">UniRef100_A5AJA9</text></g>
<g transform="translate(0 2683)"><path class="t" d="M214 .5H466"/><use href="#s" x="214"/><use href="#a" x="466"/><text x="526" y="3">UniRef100_Q9SFD8</text></g>
<g transform="translate(0 2694)"><path class="g" d="M186 .5H191M194 .5H483"/><path class="v" d="M191 .5H194"/><use href="#s" x="186"/><use href="#b" x="483"/><use href="#y" x="221"/><text x="526" y="3">UniRef100_UPI000..</text></g>
<g transform="translate(0 2705)"><path class="t" d="M197 .5H466"/><use href="#s" x="197"/><use href="#a" x="466"/><text x="526" y="3">UniRef100_B9TPT6</text></g>
<g transform="translate(0 2716)"><path class="t" d="M211 .5H466"/><use href="#s" x="211"/><use href="#a" x="466"/><text x="526" y="3">UniRef100_B0XLH5</text></g>
<g transform="translate(0 2727)"><path class="t" d="M203 .5H466"/><use href="#s" x="203"/><use href="#a" x="466"/><text x="526" y="3">UniRef100_B9IH12</text></g>
<g transform="translate(0 2738)"><path class="t" d="M214 .5H466"/><use href="#s" x="214"/><use href="#a" x="466"/><text x="526" y="3">UniRef100_B9I9U4</text></g>
<g transform="translate(0 2749)"><path class="g" d="M169 .5H466"/><use href="#s" x="169"/><use href="#b" x="466"/><use href="#y" x="180"/><text x="526" y="3">UniRef100_B6UH02</text></g>
<g transform="translate(0 2760)"><path class="g" d="M172 .5H466"/><use href="#s" x="172"/><use href="#b" x="466"/><text x="526" y="3">UniRef100_A9P3X8</text></g>
<g transform="translate(0 2771)"><path class="g" d="M197 .5H206M212 .5H506"/><path class="v" d="M206 .5H212"/><use href="#s" x="197"/><use href="#b" x="506"/><text x="526" y="3">UniRef100_C7YQ64</text></g>
<g transform="translate(0 2782)"><path class="t" d="M203 .5H486"/><use href="#s" x="203"/><use href="#a" x="486"/><text x="526" y="3">UniRef100_UPI000..</text></g>
<g transform="translate(0 2793)"><path class="t" d="M211 .5H466"/><use href="#s" x="211"/><use href="#a" x="466"/><text x="526" y="3">UniRef100_Q942Y5</text></g>
<text x="9" y="2815">Large gaps:</text>
<path d="M80 2815v-4h2v-3h1v3h2v4z" fill="#ffff66"/>
<text x="88" y="2815">(in Query)/</text>
<rect x="155" y="2811" width="6" height="1" fill="#00c0c0"/>
<text x="166" y="2815">(in Subject)</text>
<rect x="438" y="2807" width="1" height="9" fill="#333300"/>
<rect x="456" y="2807" width="1" height="9" fill="#333300"/>
<rect x="439" y="2810" width="17" height="3" fill="#00c0c0"/>
<text x="460" y="2815">=100char.</text>
</svg>
</body></html>
